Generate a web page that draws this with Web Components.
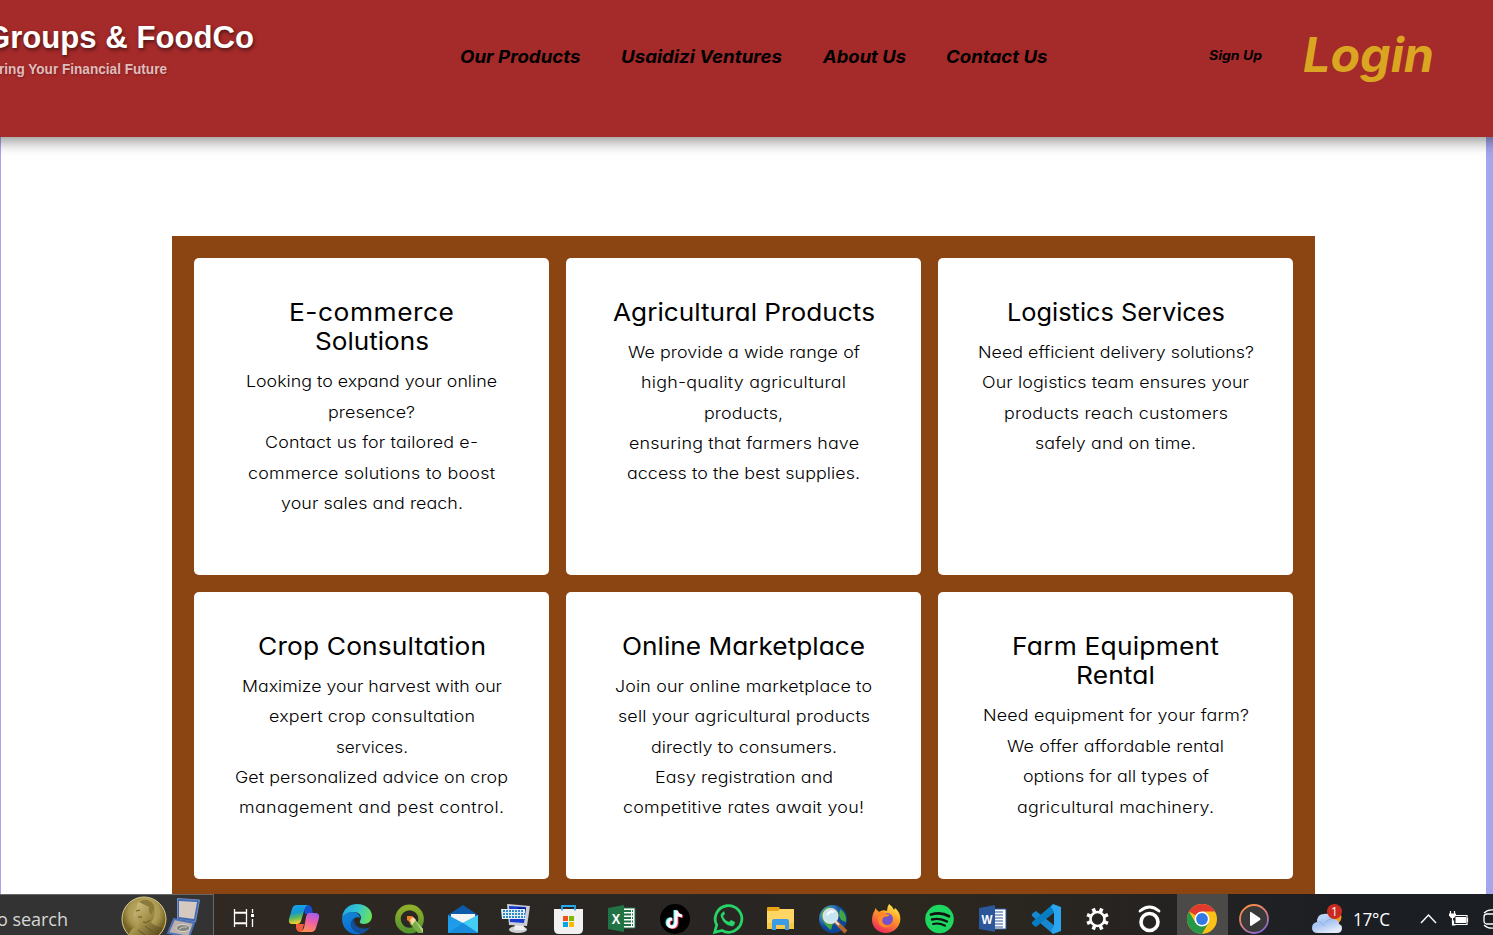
<!DOCTYPE html>
<html lang="en">
<head>
<meta charset="utf-8">
<title>Groups &amp; FoodCo</title>
<style>
html,body{margin:0;height:935px;overflow:hidden;background:#fff}
body{font-family:Inter,"Open Sans",sans-serif;color:#000}
</style>
</head>
<body>
<app-page>
  <site-header slot="header"></site-header>
  <service-grid>
    <service-card heading="E-commerce:165|Solutions:114" copy="Looking to expand your online:251|presence?:87|Contact us for tailored e-:213|commerce solutions to boost:247|your sales and reach.:182"></service-card>
    <service-card heading="Agricultural Products:262" copy="We provide a wide range of:232|high-quality agricultural:205|products,:79|ensuring that farmers have:230|access to the best supplies.:233"></service-card>
    <service-card heading="Logistics Services:218" copy="Need efficient delivery solutions?:276|Our logistics team ensures your:267|products reach customers:224|safely and on time.:161"></service-card>
    <service-card heading="Crop Consultation:228" copy="Maximize your harvest with our:260|expert crop consultation:206|services.:72|Get personalized advice on crop:273|management and pest control.:265"></service-card>
    <service-card heading="Online Marketplace:243" copy="Join our online marketplace to:257|sell your agricultural products:252|directly to consumers.:186|Easy registration and:178|competitive rates await you!:241"></service-card>
    <service-card heading="Farm Equipment:207|Rental:79" copy="Need equipment for your farm?:266|We offer affordable rental:217|options for all types of:186|agricultural machinery.:197"></service-card>
  </service-grid>
  <task-bar slot="footer"></task-bar>
</app-page>
<script>
const define = (name, html, init) => customElements.define(name, class extends HTMLElement {
  connectedCallback() {
    if (this.shadowRoot) return;
    const root = this.attachShadow({mode: 'open'});
    root.innerHTML = typeof html === 'function' ? html(this) : html;
    if (init) init(this, root);
  }
});

/* A single text line set to an exact measure: part tracking, part glyph width. */
define('fit-line', '<style>:host{display:block;white-space:nowrap}span{display:inline-block;transform-origin:0 50%}</style><span><slot></slot></span>', (el, root) => {
  const s = root.querySelector('span'), w = parseFloat(el.getAttribute('w'));
  const n = el.textContent.length, natural = s.getBoundingClientRect().width;
  const k = Math.min(1.09, Math.max(.95, w / natural));
  const ls = (w / k - natural) / (n - 1);
  s.style.letterSpacing = ls + 'px';
  s.style.transform = `scaleX(${k})`;
  s.style.width = w / k + 'px';
  s.style.marginRight = w - w / k + 'px';
  s.style.textAlign = 'left';
});

define('app-page', `<style>
:host{display:flex;flex-direction:column;height:935px;width:1493px;overflow:hidden}
main{flex:1;min-height:0;overflow:hidden;box-sizing:border-box;border-left:1px solid #a5a5ee;border-right:7px solid #a5a5ee;padding:99px 171px 0}
</style><slot name="header"></slot><main><slot></slot></main><slot name="footer"></slot>`);

define('site-header', `<style>
:host{display:flex;height:137px;flex:none;background:#a52a2a;margin:0 -20px;padding:0 20px;box-shadow:0 4px 14px rgba(0,0,0,.45);position:relative;font-style:italic;font-weight:700;font-feature-settings:"cv11"}
.brand{width:467px;flex:none;margin-left:-14px;font-family:"Liberation Sans",Arial,sans-serif;font-style:normal;color:#fff;font-feature-settings:normal}
.name{font-size:32px;line-height:36px;margin-top:19px;text-shadow:1px 2px 4px rgba(0,0,0,.55)}
.tag{font-size:14px;line-height:18px;margin:5px 0 0 13px;color:#e0bcbc;text-shadow:1px 1px 2px rgba(0,0,0,.25)}
nav{display:flex;gap:40.5px;font-size:17.6px;line-height:24px;padding-top:45px;margin-left:7px}
.up{font-size:12.8px;line-height:20px;padding-top:46px;margin-left:161px}
.in{font-size:47.5px;line-height:60px;padding-top:25px;margin-left:41.5px;color:#daa520}
</style>
<div class="brand"><fit-line class="name" w="268">Groups &amp; FoodCo</fit-line><fit-line class="tag" w="168">ring Your Financial Future</fit-line></div>
<nav><fit-line w="120.5">Our Products</fit-line><fit-line w="161">Usaidizi Ventures</fit-line><fit-line w="83">About Us</fit-line><fit-line w="101.5">Contact Us</fit-line></nav>
<fit-line class="up" w="53">Sign Up</fit-line><fit-line class="in" w="131">Login</fit-line>`);

define('service-grid', `<style>
:host{display:grid;grid-template-columns:repeat(3,355px);grid-template-rows:317px 287px;gap:17px;padding:22px;background:#8b4513}
</style><slot></slot>`);

const lines = s => s.split('|').map(l => {
  const i = l.lastIndexOf(':');
  return `<fit-line w="${l.slice(i + 1)}">${l.slice(0, i)}</fit-line>`;
}).join('');

define('service-card', el => `<style>
:host{display:block;box-sizing:border-box;background:#fff;border-radius:5px;padding-top:39.9px;text-align:center;font-feature-settings:"cv11"}
h3{margin:0 0 9.6px;font-size:24.2px;line-height:29.5px;font-weight:430}
p{margin:0;font-size:16.4px;line-height:30.35px;font-weight:340}
</style><h3>${lines(el.getAttribute('heading'))}</h3><p>${lines(el.getAttribute('copy'))}</p>`);

const icons = {
copilot: `<defs><linearGradient id="a" x1="0" y1="0" x2=".2" y2="1"><stop stop-color="#17a5f0"/><stop offset=".45" stop-color="#1696cf"/><stop offset=".72" stop-color="#61b95b"/><stop offset="1" stop-color="#f7ce2f"/></linearGradient><linearGradient id="b" x1=".7" y1="0" x2=".4" y2="1"><stop stop-color="#a85cf0"/><stop offset=".45" stop-color="#ed5fa7"/><stop offset="1" stop-color="#ff8e57"/></linearGradient></defs>
<path d="M14 1h5q3 0 4 4l1 5h-8z" fill="#1750cf"/><path d="M7 20h8l-2 8h-2q-3 0-4-4z" fill="#f05a3d"/>
<path d="M8 1h11q-3 1-4 6l-3 10q-1 3-4 3H3q-4 0-3-5L3 5q1-4 5-4z" fill="url(#a)"/><path d="M20 9h6q5 0 4 5l-3 10q-1 4-5 4H11q3-1 4-4l2-11q1-4 3-4z" fill="url(#b)"/>`,
edge: `<defs><linearGradient id="a" x1="0" y1=".3" x2="1" y2=".5"><stop stop-color="#22a8e6"/><stop offset=".5" stop-color="#34c5d3"/><stop offset="1" stop-color="#6be354"/></linearGradient><linearGradient id="b" x2=".4" y2="1"><stop stop-color="#1389d3"/><stop offset="1" stop-color="#0a6cd3"/></linearGradient></defs>
<path d="M0 14C1 5 7 0 15 0c9 0 15 6 15 12 0 5-4 8-8 8-3 0-5-1-4-3 3-5-1-9-6-9C7 8 2 10 0 14z" fill="url(#a)"/><path d="M0 14c2-5 7-6 11-6 4 0 7 3 7 6-3-2-7 0-7 4 0 5 3 10 8 12C8 32 0 25 0 14z" fill="url(#b)"/><path d="M12 14c-5 4-5 13 7 16 4-1 7-4 9-7-8 4-17 0-16-9z" fill="#114f96"/>`,
qgis: `<defs><linearGradient id="a" x2="0" y2="1"><stop stop-color="#8fae2a"/><stop offset="1" stop-color="#56962f"/></linearGradient></defs><circle cx="14.500" cy="15" r="11.600" fill="none" stroke="url(#a)" stroke-width="5.600"/><path d="M14 16l5-2 9 11v4h-5l-8-9z" fill="#7aae47"/><path d="M19 15l9 10v4z" fill="#b8d48c"/><path d="M12 12l5 0 3 3-4 4-4-3z" fill="#ef7f24"/><path d="M15 16l3-3 3 3-4 5z" fill="#f8d8ad"/>`,
mail: `<defs><linearGradient id="a" x2="1" y2="1"><stop stop-color="#1f97e8"/><stop offset="1" stop-color="#1aa7ee"/></linearGradient></defs><path d="M0 11L15 1l15 10v6H0z" fill="#0d5ba8"/><path d="M3 10h24v12H3z" fill="#f4f4f4"/><path d="M0 11l15 8 15-8v18H0z" fill="url(#a)"/><path d="M30 11v18L15 19z" fill="#43ccf5"/><path d="M0 29l15-10 15 10z" fill="#188ddd"/>`,
pc: `<ellipse cx="17" cy="25.500" rx="9" ry="3.600" fill="#cfd0d4"/><path d="M14 20h8l2 6H13z" fill="#eee"/><path d="M6 0l23 2-3 20-18-1z" fill="#cacdd4"/><path d="M8 2l17 1-2 16-14-1z" fill="#183bd0"/><path d="M16 3l9 1-1 12z" fill="#071a91"/><path d="M0 5h24l1 10H1z" fill="#e1edf7"/><path d="M2 7h21M2 10h22M2 13h22" stroke="#328bc6" stroke-width="1.800" stroke-dasharray="2 1"/>`,
store: `<path d="M0 5h29v20q0 5-5 5H5q-5 0-5-5z" fill="#f1f1f1"/><path d="M8 6.500V2h13v4.500" fill="none" stroke="#25a9ee" stroke-width="1.800"/><path d="M9 12h5v5H9z" fill="#f25022"/><path d="M15 12h5v5h-5z" fill="#7fba00"/><path d="M9 18h5v5H9z" fill="#00a4ef"/><path d="M15 18h5v5h-5z" fill="#ffb900"/>`,
excel: `<path d="M14 4h14v20H14z" fill="#fff" stroke="#217346"/><path d="M17 7h9M17 10.500h9M17 14h9M17 17.500h9M17 21h9" stroke="#217346" stroke-width="2" stroke-dasharray="7 1"/><path d="M1 4l16-3v27L1 25z" fill="#217346"/><text x="9" y="20" text-anchor="middle" font-size="15" font-weight="700" fill="#fff" textLength="8.500" lengthAdjust="spacingAndGlyphs">X</text>`,
tiktok: `<circle cx="15" cy="15" r="15"/><g fill="none" stroke-width="3.200"><path d="M15 6v12.500a4 4 0 1 1-4-4M15 6q1 5 6 5.500" stroke="#25f4ee"/><path d="M17 7v12.500a4 4 0 1 1-4-4M17 7q1 5 6 5.500" stroke="#fe2c55"/><path d="M16 6.500V19a4 4 0 1 1-4-4M16 6.500q1 5 6 5.500" stroke="#fff"/></g>`,
whatsapp: `<path d="M1.700 28.300l2-7.300A13.300 13.300 0 1 1 9 26.500z" fill="none" stroke="#25d366" stroke-width="2.800"/><path d="M10 8c-2 1-3 3-2 5 2 5 5 8 10 9 2 1 4-1 4-4l-4-2-2 2c-3-1-5-3-6-6l2-2-1-3z" fill="#25d366"/>`,
folder: `<path d="M1 4q0-1 1-1h11l1 2-1 3H1z" fill="#e7a414"/><path d="M1 7h11l2-2h14v20H1z" fill="#ffd664"/><path d="M1 19h27v5q0 1-1 1H2q-1 0-1-1z" fill="#f7c946"/><path d="M6 26v-9q0-2 2-2h13q2 0 2 2v9h-4v-5h-9v5z" fill="#3b9be4"/>`,
globe: `<defs><radialGradient id="a" cx=".3" cy=".3"><stop stop-color="#77c3e2"/><stop offset="1" stop-color="#0c479a"/></radialGradient></defs><circle cx="14" cy="15" r="14" fill="url(#a)"/><path d="M3 8q5-6 9-5l-2 10 4 6-2 7q-7-4-10-15zM21 5q7 4 6 13l-5-2-2-5z" fill="#44a83f"/><circle cx="11.500" cy="12" r="7" fill="#c5e5f2" stroke="#dde2e3" stroke-width="2"/><path d="M8 11q3-5 7-3" stroke="#fff" stroke-width="2" fill="none"/><path d="M17 18l10 10" stroke="#b5672f" stroke-width="4"/><path d="M16 17l4 4" stroke="#ddd" stroke-width="2"/>`,
firefox: `<defs><linearGradient id="a" x1=".8" y1="0" x2=".3" y2="1"><stop stop-color="#fff04b"/><stop offset=".45" stop-color="#ff9626"/><stop offset="1" stop-color="#ee265e"/></linearGradient></defs><path d="M17 0q3 2 5 6l1-2c5 4 6 9 5 14-2 7-8 11-14 11C6 29 0 23 0 16c0-4 1-7 3-10v-2l4 4q4-3 8-1 0-4 2-7z" fill="url(#a)"/><circle cx="15" cy="15" r="6" fill="#7452cc"/><path d="M5 8q6-1 10 2l3 1q-2 2-6 2-3 3-1 6c2 3 6 3 9 2-5 5-14 2-14-5 0-3 1-5 2-6z" fill="#ff8928"/>`,
spotify: `<circle cx="14.500" cy="15" r="14.300" fill="#1ed760"/><g fill="none" stroke="#111" stroke-linecap="round"><path d="M6 10.500q10-3 18 1.700" stroke-width="2.800"/><path d="M7 15.500q8-2 15 2" stroke-width="2.400"/><path d="M8 20q6-1.500 12 1.700" stroke-width="2"/></g>`,
word: `<path d="M14 5h14v20H14z" fill="#fff" stroke="#2b579a"/><path d="M17 8h8M17 11h8M17 14h8M17 17h8M17 20h8M17 23h8" stroke="#2b579a" stroke-width="1.200"/><path d="M1 4l16-3v27L1 25z" fill="#2b579a"/><text x="9" y="19.500" text-anchor="middle" font-size="13" font-weight="700" fill="#fff" textLength="11" lengthAdjust="spacingAndGlyphs">W</text>`,
vscode: `<path d="M2 9l3-2 19 15-2 8L1 12q-1-2 1-3z" fill="#1688cf"/><path d="M2 21l3 2L24 8l-2-8L1 18q-1 1 1 3z" fill="#087cc1"/><path d="M22 0l8 3v24l-8 3-2-3 3-5V8l-3-5z" fill="#2aa5ef"/>`,
gear: `<g transform="translate(14.500 15)" fill="none" stroke="#fff"><circle r="7" stroke-width="2.600"/><g stroke-width="3.600">${[22.5,67.5,112.5,157.5,202.5,247.5,292.5,337.5].map(r=>`<path d="M0-7.500V-11.300" transform="rotate(${r})"/>`).join('')}</g></g>`,
lens: `<g fill="none" stroke="#fff"><circle cx="14.500" cy="18" r="8.500" stroke-width="3.600"/><path d="M5 7q9.500-8 19 0" stroke-width="2.800" stroke-linecap="round"/></g>`,
chrome: `<circle cx="15" cy="15" r="15" fill="#fbc116"/><path d="M15 15L2 7.500A15 15 0 0 1 28 7.500H15z" fill="#e23a2e"/><path d="M2 7.500A15 15 0 0 0 15 30l6.500-11.300L15 15 8.500 18.800z" fill="#279847"/><circle cx="15" cy="15" r="7.500" fill="#fff"/><circle cx="15" cy="15" r="5.900" fill="#3379e6"/>`,
player: `<defs><linearGradient id="a" x1=".2" y1="0" x2=".8" y2="1"><stop stop-color="#ff8a3c"/><stop offset=".5" stop-color="#d77e86"/><stop offset="1" stop-color="#7c65d9"/></linearGradient></defs><circle cx="15" cy="15" r="14" fill="#393939" stroke="url(#a)" stroke-width="1.800"/><path d="M11 8.500q0-1 1-.5l9 6q1 1 0 2l-9 6q-1 0-1-1z" fill="#fff"/>`
};
define('task-icon', el => `<style>
:host{display:block;box-sizing:border-box;width:53px;flex:none;height:41px;padding:10px 0 0 11.400px}
:host([narrow]){width:52px}
:host([active]){background:linear-gradient(90deg,transparent 1.400px,#4b4a49 1.400px)}
svg{display:block;overflow:visible;font-family:"Liberation Sans",sans-serif}
</style><svg width="30" height="30" viewBox="0 0 30 30">${icons[el.getAttribute('name')]}</svg>`);

define('task-bar', `<style>
:host{display:flex;height:41px;flex:none;overflow:hidden;position:relative;background:linear-gradient(90deg,#302822 214px,#2b2723 500px,#292522 750px,#2c281f 900px,#282420 1100px,#202124 1260px,#1b1e22 1350px);color:#fff;font-family:"Open Sans","Noto Sans",sans-serif}
.search{width:214px;box-sizing:border-box;flex:none;background:#333;border-top:1px solid #686868;border-right:1px solid #686868;display:flex;color:#d6d6d6}
.q{font-size:19px;line-height:28px;padding-top:10px;margin-left:-3px;width:124px;flex:none}
.search svg{flex:none}
.view{width:63.600px;flex:none;padding:14px 0 0 19px;box-sizing:border-box}
svg{display:block;overflow:visible}
.weather{padding:9px 0 0 32px}
.t{font-size:18px;line-height:28px;padding-top:11px;margin-left:10px}
.chev{padding:20px 0 0 31.500px}.bat{padding:17px 0 0 13px}.net{padding:15px 0 0 14px}
</style>
<div class="search"><fit-line class="q" w="71">o search</fit-line>
<svg width="80" height="40" viewBox="121 895 80 40"><defs><radialGradient id="g" cx=".5" cy=".35"><stop stop-color="#c8b978"/><stop offset=".7" stop-color="#aa9850"/><stop offset="1" stop-color="#776527"/></radialGradient><linearGradient id="n" x2="1" y2="1"><stop stop-color="#e0d299"/><stop offset=".5" stop-color="#a7944c"/><stop offset="1" stop-color="#4a3c14"/></linearGradient></defs>
<circle cx="144" cy="919" r="22" fill="url(#g)" stroke="#d9cb8b"/><path d="M138 903q4-5 11-3 6 2 6 9 0 9-4 13 3 4 12 6l-6 9h-29q2-8 9-11l3-5q-6 1-6-2l1-2-2-2 3-5z" fill="url(#n)"/><path d="M139 902q5-4 11-1 5 3 4 9l-3 5-2-3 0-5-4-2z" fill="#8c7a38"/><path d="M136 911l4-1M138 917l4 0M143 922q4 2 7-2M138 930l7 5M145 926l8 6" stroke="#665523" fill="none"/>
<path d="M177.500 898.500l22 1.500-4 22-18-3z" fill="#4169b0" stroke="#738cc4"/><path d="M179 901l18 1-3 17-15-2z" fill="#d6c9bf"/><path d="M174 919l20 4-5 14-21-4z" fill="#bdb0ac" stroke="#4b70b6" stroke-width="2"/><ellipse cx="183" cy="928" rx="7" ry="3.500" fill="#858580" stroke="#dedbd0"/><path d="M179 929q4-3 8-2" stroke="#c8c8bd" fill="none"/></svg></div>
<div class="view"><svg width="22" height="20" fill="none" stroke="#fff"><path d="M1.500 1v3.500h12V1M1.500 19v-3.500h12V19M1.500 5v10h12V5zM19.500 1v4M19.500 11v8" stroke-width="1.300"/><path d="M18 6h3v3h-3z" fill="#fff" stroke="none"/></svg></div>
${Object.keys(icons).map((n, i) => `<task-icon name="${n}"${i > 13 ? ' narrow' : ''}${n === 'chrome' ? ' active' : ''}></task-icon>`).join('')}
<div class="weather"><svg width="31" height="32" viewBox="0 0 31 32"><defs><linearGradient id="c" x2=".5" y2="1"><stop stop-color="#ccdef9"/><stop offset=".55" stop-color="#a5c4f1"/><stop offset="1" stop-color="#e0eafa"/></linearGradient></defs><circle cx="22" cy="14" r="7.500" fill="#f29a21"/><path d="M6 30q-6 0-6-5 0-5 5-6 0-8 7-8 6-1 8 5 7 0 7 5 3 1 3 4 0 5-5 5z" fill="url(#c)"/><path d="M5 19q5-1 7 4M20 16q-5 0-7 4" stroke="#92b4e8" fill="none"/><circle cx="22.500" cy="8.500" r="7.500" fill="#c92b20"/><text x="22.500" y="13" text-anchor="middle" font-size="12" fill="#fff">1</text></svg></div>
<fit-line class="t" w="37">17°C</fit-line>
<div class="chev"><svg width="15" height="10" fill="none" stroke="#fff" stroke-width="1.400"><path d="M0 9l7.500-8L15 9"/></svg></div>
<div class="bat"><svg width="20" height="16" fill="none" stroke="#fff" stroke-width="1.200"><path d="M7 4.500h11v9H4.500v-4"/><path d="M6.500 6H17v6H6.500z" fill="#fff" stroke="none"/><path d="M18.500 7v4M1.500 0v3M5.500 0v3M3.500 6v8h3"/><path d="M0 2.500h7v2L5 7H2L0 4.500z" fill="#fff" stroke="none"/></svg></div>
<div class="net"><svg width="14" height="20" fill="none" stroke="#fff" stroke-width="1.300"><rect x="1" y="5" width="16" height="10" rx="3"/><path d="M1 4q4-4 10-3M1 16q4 4 10 3"/></svg></div>`);
</script>
</body>
</html>
